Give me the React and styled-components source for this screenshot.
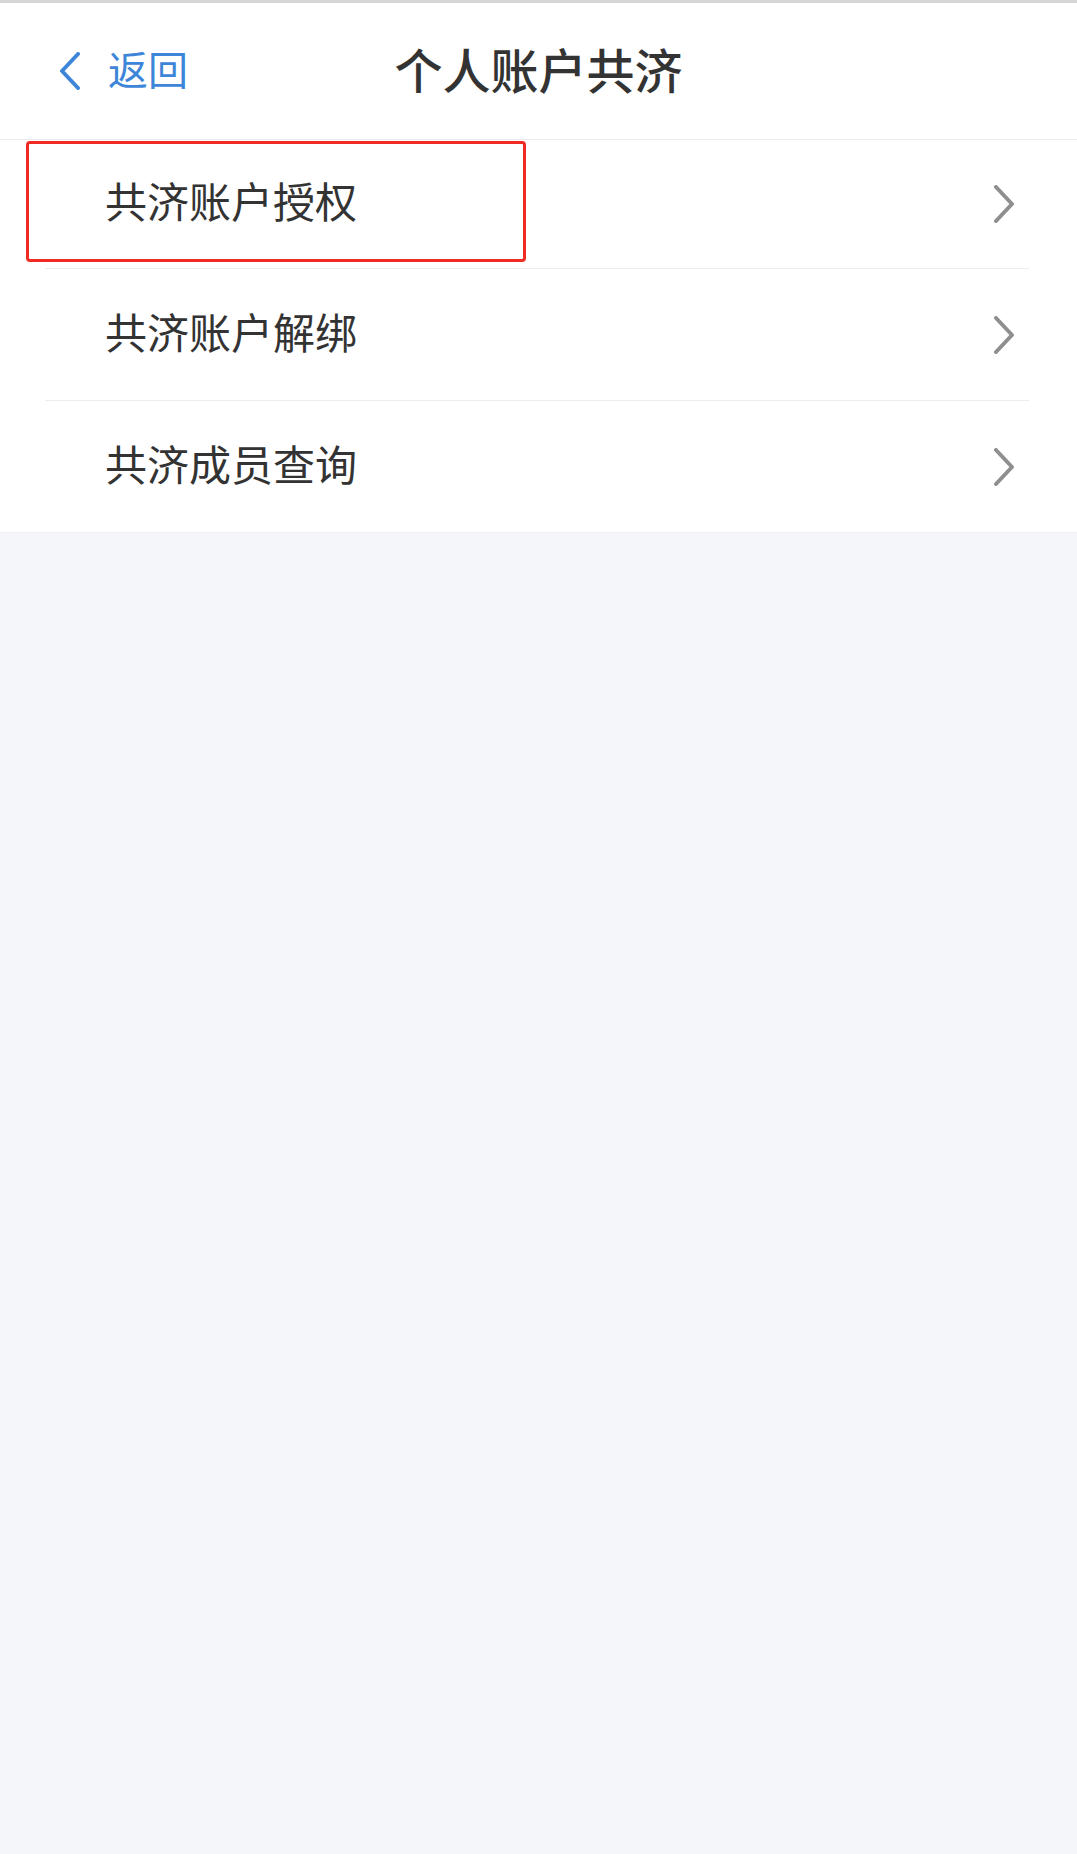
import React from 'react'
import styled, { createGlobalStyle } from 'styled-components'

const GlobalStyle = createGlobalStyle`
  html, body {
    margin: 0;
    padding: 0;
    background: #f5f6fa;
  }
  body {
    font-family: "Noto Sans CJK SC", "Noto Sans", sans-serif;
  }
`

const Page = styled.div`
  min-height: 1854px;
  background: #f5f6fa;
  border-top: 3px solid #d6d6d6;
  box-sizing: border-box;
`

const NavBar = styled.header`
  display: grid;
  grid-template-columns: 1fr auto 1fr;
  align-items: center;
  height: 136px;
  background: #fff;
  border-bottom: 1px solid #ebebeb;
`

const BackButton = styled.div`
  display: flex;
  align-items: center;
  gap: 27px;
  padding-left: 59px;
  color: #3d85d8;
  font-size: 40px;
  line-height: 1;
  cursor: pointer;
`

const BackText = styled.span`
  padding-bottom: 6px;
`

const Title = styled.h1`
  margin: 0;
  padding-bottom: 6px;
  font-size: 48px;
  font-weight: 500;
  color: #333;
  line-height: 1;
`

const Menu = styled.div`
  background: #fff;
  border-bottom: 1px solid #eeeff2;
`

const Row = styled.div`
  position: relative;
  display: flex;
  align-items: center;
  justify-content: space-between;
  height: ${({ $height }) => $height}px;
  padding: 0 62px 0 105px;
  box-sizing: border-box;
  font-size: 42px;
  line-height: 1;
  color: #333;
  cursor: pointer;
`

const Label = styled.span`
  padding-bottom: 8px;
`

const Divider = styled.div`
  height: 1px;
  margin: 0 48px 0 45px;
  background: #ececec;
`

const Highlight = styled.div`
  position: absolute;
  left: 26px;
  top: 1px;
  width: 500px;
  height: 121px;
  border: 3px solid #f02b24;
  border-radius: 4px;
  box-sizing: border-box;
  pointer-events: none;
`

const BackArrow = () => (
  <svg width="22" height="38" viewBox="0 0 22 38" fill="none">
    <path d="M19 2 L3 19 L19 36" stroke="#3d85d8" strokeWidth="4" strokeLinecap="round" strokeLinejoin="round" />
  </svg>
)

const Chevron = () => (
  <svg width="22" height="38" viewBox="0 0 22 38" fill="none">
    <path d="M3 2 L19 19 L3 36" stroke="#8f8f8f" strokeWidth="4" strokeLinecap="round" strokeLinejoin="round" />
  </svg>
)

const items = [
  { label: '共济账户授权', height: 128, marked: true },
  { label: '共济账户解绑', height: 131 },
  { label: '共济成员查询', height: 131 },
]

export default function App () {
  return (
    <>
      <GlobalStyle />
      <Page>
        <NavBar>
          <BackButton>
            <BackArrow />
            <BackText>返回</BackText>
          </BackButton>
          <Title>个人账户共济</Title>
          <div />
        </NavBar>
        <Menu>
          {items.map((item, i) => (
            <React.Fragment key={item.label}>
              {i > 0 && <Divider />}
              <Row $height={item.height}>
                <Label>{item.label}</Label>
                <Chevron />
                {item.marked && <Highlight />}
              </Row>
            </React.Fragment>
          ))}
        </Menu>
      </Page>
    </>
  )
}
